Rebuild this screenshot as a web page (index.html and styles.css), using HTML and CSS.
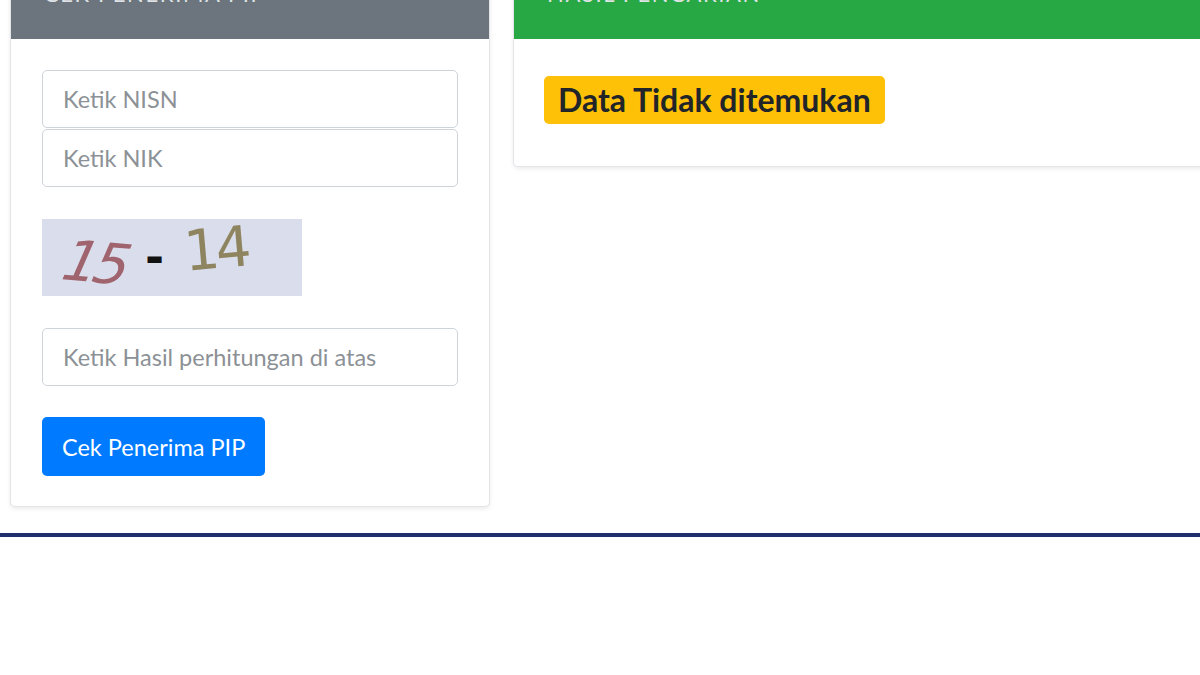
FILE: index.html
```html
<!DOCTYPE html>
<html lang="id">
<head>
<meta charset="utf-8">
<title>Cek Penerima PIP</title>
<link rel="stylesheet" href="styles.css">
</head>
<body>
<div class="page">
  <div class="row">
    <div class="card">
      <div class="card-header header-gray">CEK PENERIMA PIP</div>
      <div class="card-body">
        <input class="field" type="text" placeholder="Ketik NISN">
        <input class="field" type="text" placeholder="Ketik NIK">
        <div class="captcha">
          <span class="c-a">15</span>
          <span class="c-op">-</span>
          <span class="c-b">14</span>
        </div>
        <input class="field field-answer" type="text" placeholder="Ketik Hasil perhitungan di atas">
        <button class="btn" type="button">Cek Penerima PIP</button>
      </div>
    </div>
    <div class="card card-result">
      <div class="card-header header-green">HASIL PENCARIAN</div>
      <div class="card-body result-body">
        <span class="badge">Data Tidak ditemukan</span>
      </div>
    </div>
  </div>
  <div class="footer"></div>
</div>
</body>
</html>
```
FILE: styles.css
```css
html, body {
  margin: 0;
  padding: 0;
  background: #ffffff;
  overflow: hidden;
}
body {
  font-family: Lato, "Noto Sans", sans-serif;
  color: #212529;
}
.page {
  width: 1240px;
  margin-top: -40px;
}
.row {
  display: grid;
  grid-template-columns: 480px 720px;
  column-gap: 23px;
  align-items: start;
  padding-left: 10px;
}
.card {
  background: #fff;
  border: 1px solid #e3e5e8;
  border-radius: 5px;
  box-shadow: 0 2px 4px rgba(0, 0, 0, 0.08);
  overflow: hidden;
}
.card-header {
  padding: 21px 33px 33px;
  font-size: 22px;
  line-height: 24px;
  color: #dfe3e6;
  letter-spacing: 1.6px;
}
.header-gray { background: #6c757d; }
.header-green { background: #28a745; }
.card-body {
  padding: 31px 31px 30px;
  display: flex;
  flex-direction: column;
  align-items: flex-start;
}
.field {
  box-sizing: border-box;
  width: 416px;
  height: 58px;
  margin: 0 0 1px;
  padding: 0 20px;
  border: 1px solid #ced4da;
  border-radius: 5px;
  font-family: inherit;
  font-size: 23.5px;
  color: #495057;
  background: #fff;
}
.field::placeholder { color: #8c9196; }
.captcha {
  margin: 31px 0 32px;
  width: 260px;
  height: 77px;
  background: #dadeec;
  position: relative;
  font-family: "DejaVu Sans", sans-serif;
}
.c-a {
  position: absolute;
  left: 22px;
  top: 12px;
  font-size: 56px;
  line-height: 64px;
  font-style: italic;
  color: #a0646e;
  transform: rotate(5deg) skewX(-8deg);
  letter-spacing: -5px;
}
.c-op {
  position: absolute;
  left: 103px;
  top: 10px;
  font-size: 46px;
  line-height: 56px;
  font-weight: bold;
  color: #111;
}
.c-b {
  position: absolute;
  left: 142px;
  top: -2px;
  font-size: 56px;
  line-height: 64px;
  color: #8f8460;
  transform: rotate(-5deg);
  letter-spacing: -4px;
}
.field-answer { margin-bottom: 31px; }
.btn {
  height: 59px;
  padding: 0 20px;
  border: 0;
  border-radius: 5px;
  background: #007bff;
  color: #fff;
  font-family: inherit;
  font-size: 23.5px;
}
.result-body { padding: 37px 30px 42px; }
.badge {
  display: inline-block;
  padding: 0 14px;
  height: 48px;
  line-height: 48px;
  background: #ffc107;
  border-radius: 5px;
  font-size: 32px;
  font-weight: bold;
  color: #212529;
}
.footer {
  margin-top: 26px;
  border-top: 4px solid #1f2e6c;
  height: 140px;
}
```
